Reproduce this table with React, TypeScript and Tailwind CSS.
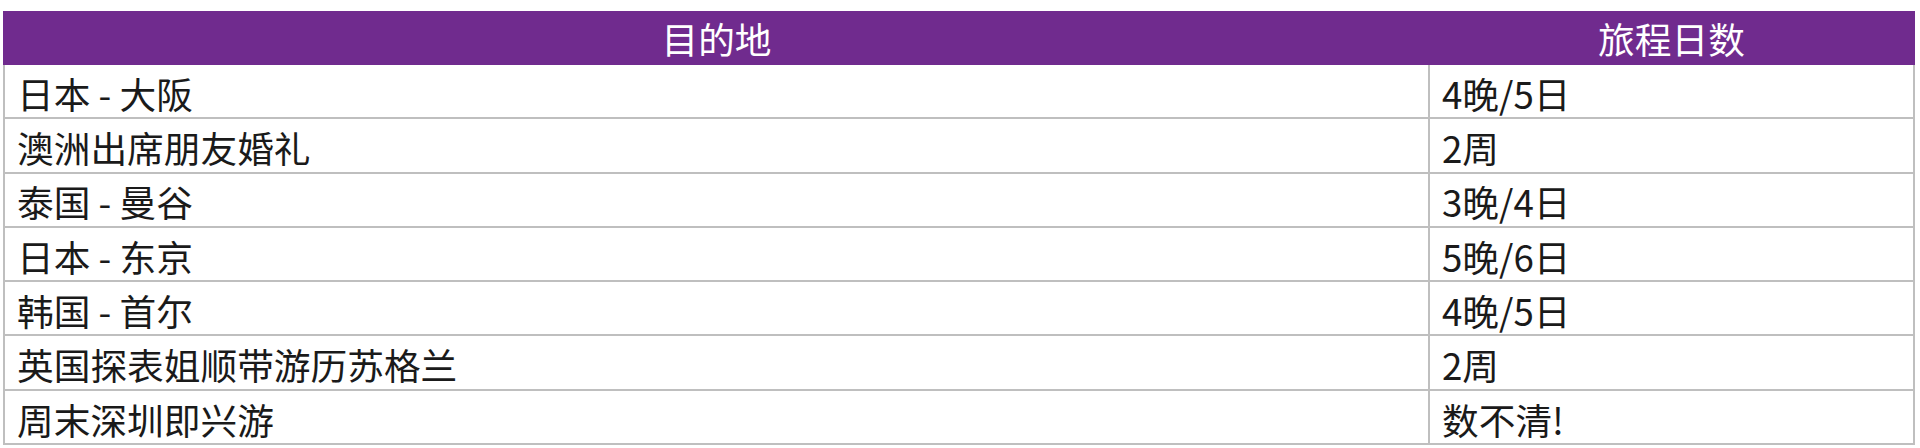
import React from 'react';

const rows: [string, string][] = [
  ['日本 - 大阪', '4晚/5日'],
  ['澳洲出席朋友婚礼', '2周'],
  ['泰国 - 曼谷', '3晚/4日'],
  ['日本 - 东京', '5晚/6日'],
  ['韩国 - 首尔', '4晚/5日'],
  ['英国探表姐顺带游历苏格兰', '2周'],
  ['周末深圳即兴游', '数不清!'],
];

export default function App() {
  return (
    <div className="w-[1920px] h-[448px] bg-white pt-[11px] pl-[3px] font-['Noto_Sans_CJK_SC',sans-serif] text-[36.7px] text-[#1a1a1a]">
      <table className="w-[1912px] border-collapse table-fixed">
        <colgroup>
          <col className="w-[1425px]" />
          <col />
        </colgroup>
        <thead>
          <tr className="h-[52px] bg-[#702b8e] text-white">
            <th className="border-2 border-[#702b8e] font-normal leading-none text-center p-0">目的地</th>
            <th className="border-2 border-[#702b8e] font-normal leading-none text-center p-0">旅程日数</th>
          </tr>
        </thead>
        <tbody>
          {rows.map(([place, days]) => (
            <tr key={place} className="h-[54.3px]">
              <td className="border-2 border-[#bfbfbf] leading-none pl-[12px] pt-[4px] pb-0">{place}</td>
              <td className="border-2 border-[#bfbfbf] leading-none pl-[12px] pt-[4px] pb-0">{days}</td>
            </tr>
          ))}
        </tbody>
      </table>
    </div>
  );
}
